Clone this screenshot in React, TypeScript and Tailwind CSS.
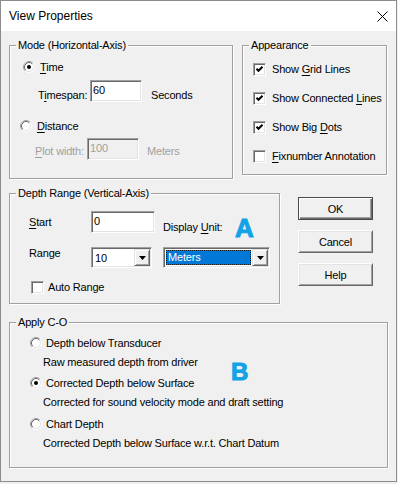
import React from 'react';

// mnemonic underline
const U = ({ children }: { children: React.ReactNode }) => (
  <span className="underline decoration-1 underline-offset-[2px]">{children}</span>
);

const Radio = ({ checked }: { checked?: boolean }) => (
  <svg width="12" height="12" viewBox="0 0 12 12" className="shrink-0">
    <circle cx="6" cy="6" r="4.5" fill="#fff" />
    <path d="M2.11 9.89 A5.5 5.5 0 0 1 9.89 2.11" fill="none" stroke="#a0a0a0" />
    <path d="M9.89 2.11 A5.5 5.5 0 0 1 2.11 9.89" fill="none" stroke="#fff" />
    <path d="M2.82 9.18 A4.5 4.5 0 0 1 9.18 2.82" fill="none" stroke="#696969" />
    <path d="M9.18 2.82 A4.5 4.5 0 0 1 2.82 9.18" fill="none" stroke="#e3e3e3" />
    {checked && <circle cx="6" cy="6" r="2" fill="#000" />}
  </svg>
);

const Check = ({ checked }: { checked?: boolean }) => (
  <div className="w-[13px] h-[13px] shrink-0 bg-white border border-t-[#a0a0a0] border-l-[#a0a0a0] border-b-white border-r-white shadow-[inset_1px_1px_0_#696969,inset_-1px_-1px_0_#e3e3e3] flex items-center justify-center">
    {checked && (
      <svg width="9" height="9" viewBox="0 0 9 9">
        <polyline points="1.5,3.8 3.5,5.8 7.5,1.8" fill="none" stroke="#000" strokeWidth="2" />
      </svg>
    )}
  </div>
);

const Field = ({ value, className, disabled }: { value: string; className: string; disabled?: boolean }) => (
  <div
    className={`${className} h-[22px] pl-[2px] pt-[2px] border border-t-[#a0a0a0] border-l-[#a0a0a0] border-b-white border-r-white shadow-[inset_1px_1px_0_#696969,inset_-1px_-1px_0_#e3e3e3] ${
      disabled ? 'bg-[#f0f0f0] text-[#a0a0a0]' : 'bg-white'
    }`}
  >
    {value}
  </div>
);

const Arrow = () => (
  <div className="w-[16px] h-[17px] shrink-0 bg-[#f0f0f0] border border-t-[#e3e3e3] border-l-[#e3e3e3] border-b-[#696969] border-r-[#696969] shadow-[inset_1px_1px_0_#fff,inset_-1px_-1px_0_#a0a0a0] flex items-center justify-center">
    <svg width="7" height="4" viewBox="0 0 7 4">
      <polygon points="0,0 7,0 3.5,4" fill="#000" />
    </svg>
  </div>
);

const Combo = ({ value, className, selected }: { value: string; className: string; selected?: boolean }) => (
  <div
    className={`${className} h-[21px] bg-white flex items-center p-[1px] border border-t-[#a0a0a0] border-l-[#a0a0a0] border-b-white border-r-white shadow-[inset_1px_1px_0_#696969,inset_-1px_-1px_0_#e3e3e3]`}
  >
    {selected ? (
      <div className="flex-1 h-[15px] ml-[1px] mr-[1px] bg-[#0078d7] text-white border border-dotted border-[#1a1a1a] pl-[1px] leading-[13px]">
        {value}
      </div>
    ) : (
      <div className="flex-1 pl-[2px]">{value}</div>
    )}
    <Arrow />
  </div>
);

const Btn = ({ children, def }: { children: React.ReactNode; def?: boolean }) => (
  <div
    className={`w-[75px] h-[23px] bg-[#f0f0f0] flex items-center justify-center ${
      def
        ? 'border border-[#4a4a4a] shadow-[inset_1px_1px_0_#fff,inset_-1px_-1px_0_#696969,inset_-2px_-2px_0_#a0a0a0]'
        : 'border border-t-white border-l-white border-b-[#696969] border-r-[#696969] shadow-[inset_1px_1px_0_#e3e3e3,inset_-1px_-1px_0_#a0a0a0]'
    }`}
  >
    {children}
  </div>
);

const Group = ({ label, className, children }: { label: string; className: string; children: React.ReactNode }) => (
  <div className={`${className} shrink-0 border border-[#a0a0a0] shadow-[inset_1px_1px_0_#fff,1px_1px_0_#fff]`}>
    <div className="-mt-[8px] ml-[6px] w-fit px-[2px] h-[14px] bg-[#f0f0f0]">{label}</div>
    {children}
  </div>
);

export default function App() {
  return (
    <div className="w-[398px] h-[484px] bg-[#f0f0f0] font-['Liberation_Sans',Arial,sans-serif] text-[11px] leading-[14px] tracking-[-0.18px] text-black">
      <div className="w-[397px] h-[482px] border border-[#8c8c8c] flex flex-col bg-[#f0f0f0]">
        <div className="h-[30px] shrink-0 bg-white flex items-center justify-between pl-[8px] pr-[8px]">
          <span className="text-[12px] tracking-normal">View Properties</span>
          <svg width="11" height="11" viewBox="0 0 11 11">
            <path d="M0.5 0.5 L10.5 10.5 M10.5 0.5 L0.5 10.5" stroke="#000" strokeWidth="1" />
          </svg>
        </div>

        <div className="flex-1 pl-[8px] pt-[14px]">
          <div className="flex items-start">
            <Group label="Mode (Horizontal-Axis)" className="w-[224px] h-[134px]">
              <div className="mt-[7px] ml-[13px] flex items-center h-[16px] gap-[5px]">
                <Radio checked />
                <span>
                  <U>T</U>ime
                </span>
              </div>
              <div className="mt-[5px] flex items-start">
                <span className="ml-[28px] w-[52px] mt-[8px]">
                  T<U>i</U>mespan:
                </span>
                <Field value="60" className="w-[52px]" />
                <span className="ml-[9px] mt-[8px]">Seconds</span>
              </div>
              <div className="mt-[16px] ml-[10px] flex items-center h-[16px] gap-[5px]">
                <Radio />
                <span>
                  <U>D</U>istance
                </span>
              </div>
              <div className="mt-[4px] flex items-start text-[#a0a0a0]">
                <span className="ml-[25px] w-[52px] mt-[6px]">
                  <U>P</U>lot width:
                </span>
                <Field value="100" className="w-[52px]" disabled />
                <span className="ml-[8px] mt-[6px]">Meters</span>
              </div>
            </Group>

            <Group label="Appearance" className="ml-[9px] w-[145px] h-[130px]">
              <div className="mt-[9px] ml-[10px] flex flex-col gap-[13px]">
                <div className="flex items-center h-[16px] gap-[6px]">
                  <Check checked />
                  <span>
                    Show <U>G</U>rid Lines
                  </span>
                </div>
                <div className="flex items-center h-[16px] gap-[6px]">
                  <Check checked />
                  <span>
                    Show Connected <U>L</U>ines
                  </span>
                </div>
                <div className="flex items-center h-[16px] gap-[6px]">
                  <Check checked />
                  <span>
                    Show Big <U>D</U>ots
                  </span>
                </div>
                <div className="flex items-center h-[16px] gap-[6px]">
                  <Check />
                  <span>
                    <U>F</U>ixnumber Annotation
                  </span>
                </div>
              </div>
            </Group>
          </div>

          <div className="flex items-start mt-[14px]">
            <Group label="Depth Range (Vertical-Axis)" className="w-[271px] h-[111px]">
              <div className="mt-[11px] flex items-start h-[22px]">
                <span className="ml-[19px] w-[62px] mt-[4px]">
                  <U>S</U>tart
                </span>
                <Field value="0" className="w-[64px]" />
                <span className="ml-[8px] w-[72px] mt-[9px]">
                  Display <U>U</U>nit:
                </span>
                <span className="mt-[4px] text-[26px] leading-[26px] tracking-normal font-bold text-[#13a2e6] [-webkit-text-stroke:1px_#13a2e6]">
                  A
                </span>
              </div>
              <div className="mt-[13px] flex items-start h-[22px]">
                <span className="ml-[19px] w-[62px]">Range</span>
                <Combo value="10" className="mt-[1px] w-[61px]" />
                <Combo value="Meters" className="ml-[11px] mt-[1px] w-[107px]" selected />
              </div>
              <div className="mt-[12px] ml-[21px] flex items-center h-[14px] gap-[4px]">
                <Check />
                <span>Auto Range</span>
              </div>
            </Group>

            <div className="ml-[18px] mt-[4px] flex flex-col gap-[10px]">
              <Btn def>OK</Btn>
              <Btn>Cancel</Btn>
              <Btn>Help</Btn>
            </div>
          </div>

          <Group label="Apply C-O" className="relative mt-[18px] w-[379px] h-[146px]">
            <div className="mt-[6px] ml-[20px] flex items-center h-[16px] gap-[4px]">
              <Radio />
              <span>Depth below Transducer</span>
            </div>
            <div className="mt-[4px] ml-[33px]">Raw measured depth from driver</div>
            <div className="mt-[6px] ml-[20px] flex items-center h-[16px] gap-[4px]">
              <Radio checked />
              <span>Corrected Depth below Surface</span>
            </div>
            <div className="mt-[4px] ml-[33px]">Corrected for sound velocity mode and draft setting</div>
            <div className="mt-[7px] ml-[20px] flex items-center h-[16px] gap-[4px]">
              <Radio />
              <span>Chart Depth</span>
            </div>
            <div className="mt-[4px] ml-[33px]">Corrected Depth below Surface w.r.t. Chart Datum</div>
            <span className="absolute left-[221px] top-[37px] text-[24px] leading-[24px] tracking-normal font-bold text-[#13a2e6] [-webkit-text-stroke:1px_#13a2e6]">
              B
            </span>
          </Group>
        </div>
      </div>
    </div>
  );
}
